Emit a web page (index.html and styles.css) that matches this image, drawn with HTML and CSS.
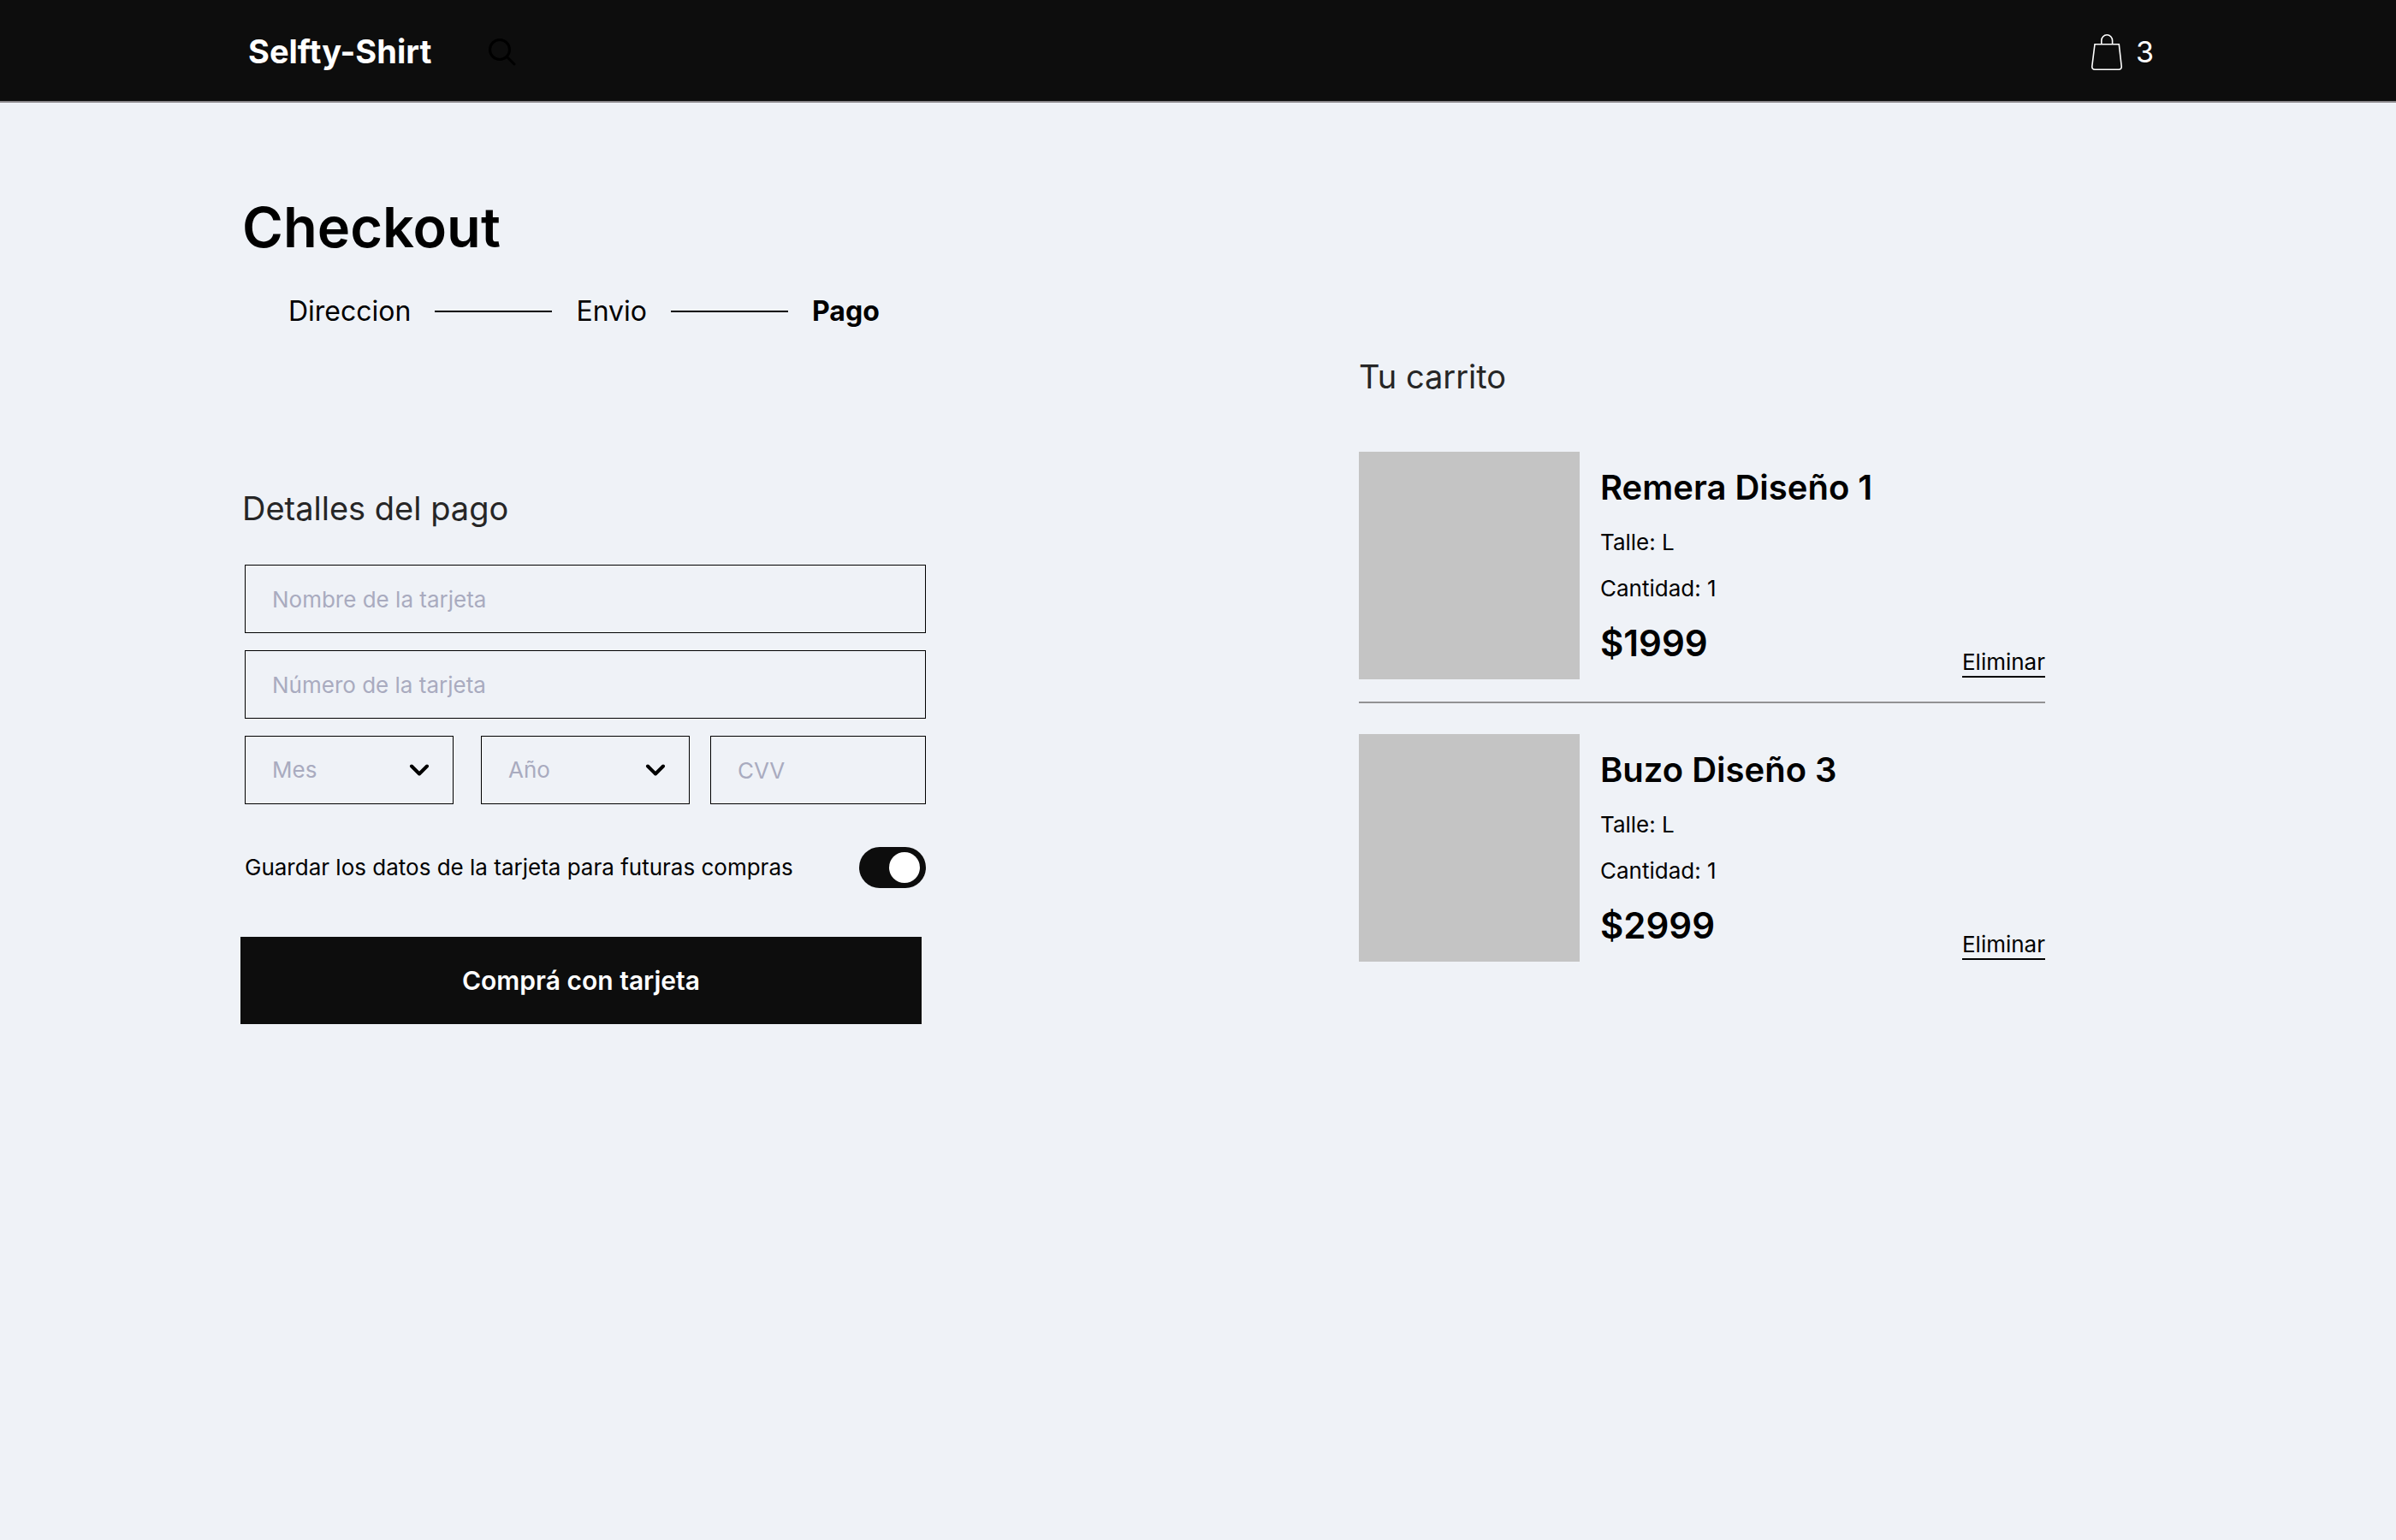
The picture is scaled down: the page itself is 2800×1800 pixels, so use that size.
FILE: index.html
```html
<!DOCTYPE html>
<html lang="es">
<head>
  <meta charset="utf-8">
  <meta name="viewport" content="width=device-width, initial-scale=1">
  <title>Checkout · Selfty-Shirt</title>
  <link rel="stylesheet" href="styles.css">
</head>
<body>
  <header class="topbar">
    <a class="logo" href="#">Selfty-Shirt</a>
    <button class="icon-button" type="button" aria-label="Buscar">
      <svg width="34" height="34" viewBox="0 0 34 34" fill="none" stroke="#000" stroke-width="3" stroke-linecap="round">
        <circle cx="14" cy="14" r="11.5"/>
        <path d="M22.5 22.5 31 31"/>
      </svg>
    </button>
    <a class="cart-link" href="#carrito" aria-label="Carrito, 3 productos">
      <svg width="36" height="42" viewBox="0 0 36 42" fill="none" stroke="#fff" stroke-width="1.6">
        <path d="M4 11.7H32.3L35.2 37.5Q35.4 41.2 32 41.2H4Q.6 41.2 .8 37.5Z"/>
        <path d="M11.8 11.7V7.5a6.4 6.7 0 0 1 12.8 0V11.7"/>
      </svg>
      <span>3</span>
    </a>
  </header>

  <main class="page">
    <section class="payment">
      <h1 class="title">Checkout</h1>
      <ol class="steps">
        <li>Direccion</li>
        <li>Envio</li>
        <li class="current" aria-current="step">Pago</li>
      </ol>

      <form class="form">
        <h2 class="subtitle">Detalles del pago</h2>
        <div class="fields">
          <input class="field" type="text" placeholder="Nombre de la tarjeta" aria-label="Nombre de la tarjeta">
          <input class="field" type="text" placeholder="Número de la tarjeta" aria-label="Número de la tarjeta">
          <div class="field-row">
            <div class="dates">
              <div class="select">
                <select class="field" aria-label="Mes"><option>Mes</option></select>
                <svg class="chevron" width="24" height="14" viewBox="0 0 24 14"><path d="M3 2.5 12 11.5 21 2.5"/></svg>
              </div>
              <div class="select">
                <select class="field" aria-label="Año"><option>Año</option></select>
                <svg class="chevron" width="24" height="14" viewBox="0 0 24 14"><path d="M3 2.5 12 11.5 21 2.5"/></svg>
              </div>
            </div>
            <input class="field" type="text" placeholder="CVV" aria-label="CVV">
          </div>
        </div>
        <div class="save">
          <label for="save-card">Guardar los datos de la tarjeta para futuras compras</label>
          <input class="toggle" id="save-card" type="checkbox" role="switch" checked>
        </div>
        <button class="pay" type="submit">Comprá con tarjeta</button>
      </form>
    </section>

    <section class="cart" id="carrito">
      <h2 class="subtitle">Tu carrito</h2>
      <ul class="items">
        <li class="item">
          <div class="photo"></div>
          <div class="details">
            <h3 class="name">Remera Diseño 1</h3>
            <p class="detail">Talle: L</p>
            <p class="detail">Cantidad: 1</p>
            <p class="price">$1999</p>
          </div>
          <a class="remove" href="#">Eliminar</a>
        </li>
        <li class="item">
          <div class="photo"></div>
          <div class="details">
            <h3 class="name">Buzo Diseño 3</h3>
            <p class="detail">Talle: L</p>
            <p class="detail">Cantidad: 1</p>
            <p class="price">$2999</p>
          </div>
          <a class="remove" href="#">Eliminar</a>
        </li>
      </ul>
    </section>
  </main>
</body>
</html>
```
FILE: styles.css
```css
:root {
  --ink: #0d0d0d;
  --paper: #eff2f7;
  --muted: #a9abbf;
}

* {
  box-sizing: border-box;
  margin: 0;
}

body {
  background: var(--paper);
  color: #000;
  font-family: Inter, "Liberation Sans", sans-serif;
  font-size: 26px;
  line-height: 36px;
}

a {
  color: inherit;
  text-decoration: none;
}

ol,
ul {
  padding: 0;
  list-style: none;
}

/* Top bar */

.topbar {
  display: flex;
  align-items: center;
  height: 120px;
  padding: 4px 283px 0 290px;
  border-bottom: 2px solid #8a878a;
  background: var(--ink);
  color: #fff;
}

.logo {
  padding-bottom: 2px;
  font-size: 38px;
  font-weight: 700;
  line-height: 48px;
}

.icon-button {
  display: flex;
  margin-left: 66px;
  padding: 0;
  border: 0;
  background: none;
}

.cart-link {
  display: flex;
  align-items: center;
  gap: 16px;
  margin-left: auto;
  font-size: 34px;
  line-height: 44px;
}

/* Page columns */

.page {
  display: grid;
  grid-template-columns: 801fr 802fr;
  column-gap: 506px;
  padding: 106px 410px 106px 281px;
}

.title {
  padding-left: 2px;
  font-size: 65px;
  font-weight: 600;
  line-height: 80px;
}

.steps {
  display: flex;
  align-items: center;
  margin-top: 36px;
  padding-left: 56px;
  font-size: 32px;
  line-height: 44px;
}

.steps li {
  display: flex;
  align-items: center;
}

.steps li + li::before {
  content: "";
  width: 137px;
  height: 2px;
  margin: 0 28px;
  background: #000;
}

.steps .current {
  font-weight: 700;
}

.subtitle {
  color: #262626;
  font-size: 38px;
  font-weight: 400;
  line-height: 48px;
}

/* Payment form */

.form {
  margin-top: 184px;
}

.form .subtitle {
  padding-left: 2px;
}

.fields {
  display: grid;
  gap: 20px;
  margin-top: 42px;
  padding-left: 5px;
}

.field {
  width: 100%;
  min-width: 0;
  height: 80px;
  padding: 0 31px;
  border: 1px solid #000;
  border-radius: 0;
  background: none;
  color: #000;
  font: inherit;
}

.field::placeholder {
  color: var(--muted);
  opacity: 1;
}

select.field {
  appearance: none;
  color: var(--muted);
}

.field-row {
  display: grid;
  grid-template-columns: 520fr 252fr;
  gap: 24px;
}

.dates {
  display: grid;
  grid-template-columns: 1fr 1fr;
  gap: 32px;
}

.select {
  display: grid;
  align-items: center;
}

.select > * {
  grid-area: 1 / 1;
}

.chevron {
  justify-self: end;
  margin-right: 28px;
  fill: none;
  stroke: #000;
  stroke-width: 4;
  stroke-linecap: round;
  stroke-linejoin: round;
  pointer-events: none;
}

.save {
  display: flex;
  align-items: center;
  justify-content: space-between;
  margin-top: 50px;
  padding-left: 5px;
}

.toggle {
  display: flex;
  align-items: center;
  justify-content: flex-end;
  appearance: none;
  width: 78px;
  height: 48px;
  padding: 0 7px;
  border-radius: 24px;
  background: var(--ink);
}

.toggle::before {
  content: "";
  width: 36px;
  height: 36px;
  border-radius: 50%;
  background: #fff;
}

.toggle:not(:checked) {
  justify-content: flex-start;
  background: var(--muted);
}

.pay {
  width: calc(100% - 5px);
  height: 102px;
  margin-top: 57px;
  border: 0;
  background: var(--ink);
  color: #fff;
  font: inherit;
  font-size: 30px;
  font-weight: 600;
}

/* Cart */

.cart {
  padding-top: 190px;
}

.items {
  margin-top: 64px;
}

.item {
  display: flex;
  gap: 24px;
}

.item + .item {
  margin-top: 26px;
  padding-top: 36px;
  border-top: 2px solid #929294;
}

.photo {
  width: 258px;
  height: 266px;
  background: #c4c4c4;
}

.details {
  display: grid;
  align-content: center;
  flex: 1;
  gap: 18px;
}

.name,
.price {
  font-weight: 600;
  line-height: 56px;
}

.name {
  font-size: 40px;
}

.price {
  font-size: 42px;
}

.remove {
  align-self: flex-end;
  margin-bottom: 2px;
  border-bottom: 2px solid #000;
  line-height: 32px;
}

@media (max-width: 1900px) {
  .topbar,
  .page {
    padding-right: 5%;
    padding-left: 5%;
  }

  .page {
    column-gap: 5%;
  }
}

@media (max-width: 1300px) {
  .page {
    grid-template-columns: 1fr;
  }

  .cart {
    padding-top: 80px;
  }
}
```
